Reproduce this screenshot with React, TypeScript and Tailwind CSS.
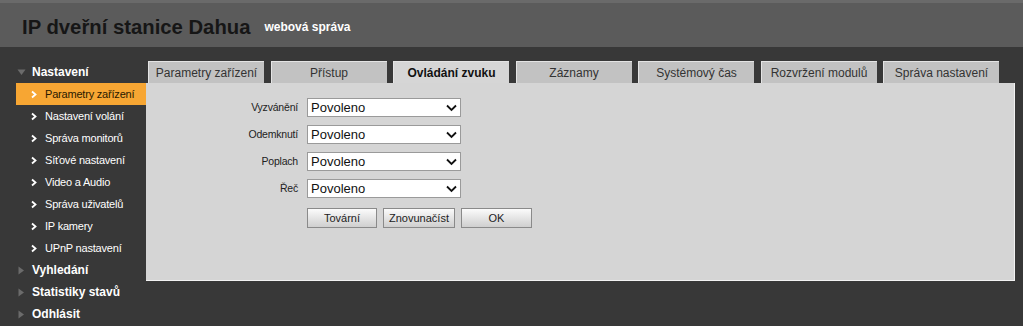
import { useState } from "react"

const menu = [
  "Parametry zařízení",
  "Nastavení volání",
  "Správa monitorů",
  "Síťové nastavení",
  "Video a Audio",
  "Správa uživatelů",
  "IP kamery",
  "UPnP nastavení",
]

const tabs = [
  "Parametry zařízení",
  "Přístup",
  "Ovládání zvuku",
  "Záznamy",
  "Systémový čas",
  "Rozvržení modulů",
  "Správa nastavení",
]

const fields = ["Vyzvánění", "Odemknutí", "Poplach", "Řeč"]

function Chevron() {
  return (
    <svg width="8" height="9" viewBox="0 0 8 9" className="shrink-0">
      <path d="M2 1.5 L5.5 4.5 L2 7.5" fill="none" stroke="#ffffff" strokeWidth="1.8" />
    </svg>
  )
}

function Triangle({ open }: { open?: boolean }) {
  return open ? (
    <svg width="9" height="8" viewBox="0 0 9 8" className="shrink-0">
      <path d="M0.5 1.5 L8.5 1.5 L4.5 7 Z" fill="#6b6b6b" />
    </svg>
  ) : (
    <svg width="8" height="9" viewBox="0 0 8 9" className="shrink-0">
      <path d="M1.5 0.5 L7 4.5 L1.5 8.5 Z" fill="#6b6b6b" />
    </svg>
  )
}

function Select() {
  return (
    <div className="relative h-[19px] w-[154px] border border-[#9a9a9a] bg-white">
      <div className="pl-[3px] text-[13px] leading-[17px] text-[#111]">Povoleno</div>
      <svg width="11" height="8" viewBox="0 0 11 8" className="absolute right-[3px] top-[5px]">
        <path d="M1 1.5 L5.5 6 L10 1.5" fill="none" stroke="#111" strokeWidth="1.8" />
      </svg>
    </div>
  )
}

function Btn({ label, w }: { label: string; w: string }) {
  return (
    <button
      className={`${w} h-[20px] border border-[#8a8a8a] bg-gradient-to-b from-[#fbfbfb] to-[#cfcfcf] text-[11px] leading-[18px] text-[#222]`}
    >
      {label}
    </button>
  )
}

export default function App() {
  const [active] = useState(2)

  return (
    <div className="h-[326px] w-[1023px] overflow-hidden bg-[#383838] font-['Liberation_Sans',Arial,sans-serif]">
      {/* hlavička */}
      <div className="flex h-[47px] items-end border-t-[3px] border-[#6a6a6a] bg-[#5b5b5b] pb-[8px] pl-[22px]">
        <span className="text-[20.3px] font-bold leading-[24px] text-[#161616]">IP dveřní stanice Dahua</span>
        <span className="mb-[3px] ml-[14px] text-[12px] font-bold text-white">webová správa</span>
      </div>

      <div className="flex">
        {/* levé menu */}
        <div className="w-[146px] shrink-0 pt-[14px]">
          <div className="flex h-[22px] items-center gap-[6px] pl-[17px] text-[12px] font-bold text-white">
            <Triangle open />
            Nastavení
          </div>
          {menu.map((m, i) => (
            <div
              key={m}
              className={`ml-[16px] flex h-[22px] items-center gap-[7px] pl-[14px] text-[11px] tracking-[-0.2px] ${
                i === 0 ? "bg-[#f7a633] text-[#2a1a00]" : "text-white"
              }`}
            >
              <Chevron />
              {m}
            </div>
          ))}
          {["Vyhledání", "Statistiky stavů", "Odhlásit"].map((m) => (
            <div key={m} className="flex h-[22px] items-center gap-[7px] pl-[17px] text-[12px] font-bold text-white">
              <Triangle />
              {m}
            </div>
          ))}
        </div>

        {/* obsah */}
        <div className="w-[869px] pt-[14px]">
          <div className="flex h-[22px] gap-[6.5px] pl-[2px]">
            {tabs.map((t, i) => (
              <div
                key={t}
                className={`flex h-[22px] w-[116px] items-center justify-center border-t border-l border-[#e4e4e4] text-[12px] ${
                  i === active ? "bg-[#d6d6d6] font-bold text-[#111]" : "bg-[#c2c2c2] text-[#333]"
                }`}
              >
                {t}
              </div>
            ))}
          </div>
          <div className="h-[198px] border-r border-b border-[#f2f2f2] bg-[#d5d5d5] pt-[15px]">
            <div className="flex flex-col gap-[8px]">
              {fields.map((f) => (
                <div key={f} className="flex items-center">
                  <div className="w-[161px] pr-[9px] text-right text-[10.5px] tracking-[-0.2px] text-[#222]">{f}</div>
                  <Select />
                </div>
              ))}
            </div>
            <div className="mt-[10px] flex gap-[6px] pl-[161px]">
              <Btn label="Tovární" w="w-[70px]" />
              <Btn label="Znovunačíst" w="w-[72px]" />
              <Btn label="OK" w="w-[71px]" />
            </div>
          </div>
        </div>
      </div>
    </div>
  )
}
